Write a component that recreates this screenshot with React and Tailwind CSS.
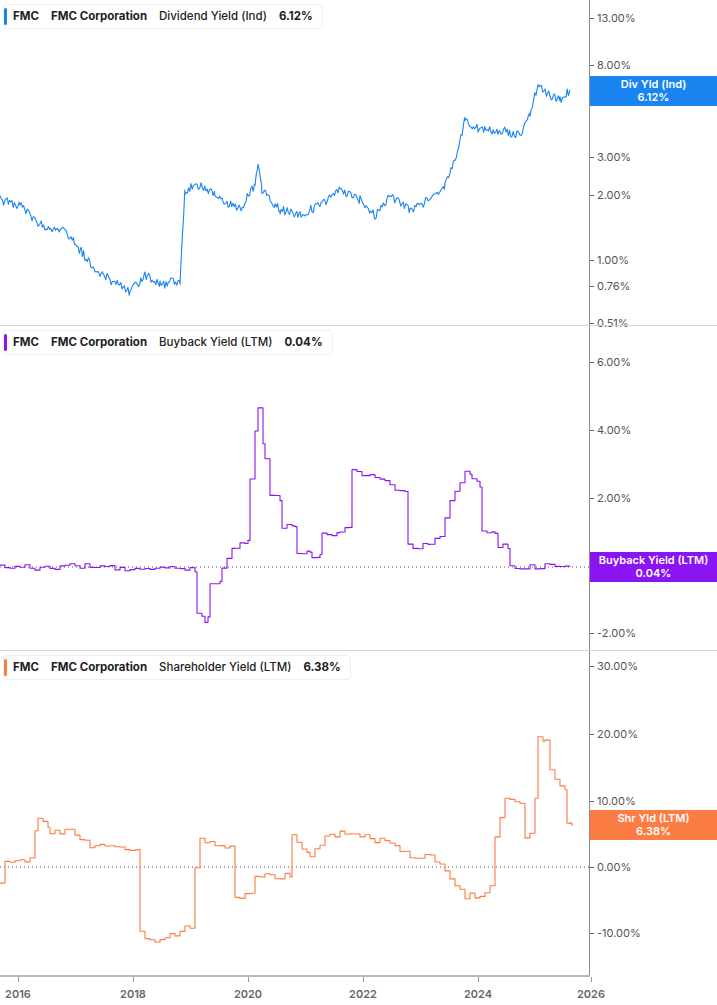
import React from "react"

const W = 590
const H = 325

function rand(seed) {
  let s = seed
  return () => {
    s = (s * 16807) % 2147483647
    return s / 2147483647 - 0.5
  }
}

function buildPath(keys, noise, seed, step) {
  const r = rand(seed)
  const pts = []
  let prevY = null
  for (let i = 0; i < keys.length - 1; i++) {
    const [x0, y0] = keys[i]
    const [x1, y1] = keys[i + 1]
    const inc = step ? 5 : 1.2
    for (let x = x0; x < x1; x += inc) {
      const t = (x - x0) / (x1 - x0 || 1)
      let y = y0 + (y1 - y0) * t + r() * noise
      if (step && prevY !== null) pts.push(`${x.toFixed(1)},${prevY.toFixed(1)}`)
      pts.push(`${x.toFixed(1)},${y.toFixed(1)}`)
      prevY = y
    }
  }
  const last = keys[keys.length - 1]
  if (step && prevY !== null) pts.push(`${last[0]},${prevY.toFixed(1)}`)
  pts.push(`${last[0]},${last[1]}`)
  return pts.join(" ")
}

const panels = [
  {
    ticker: "FMC",
    name: "FMC Corporation",
    metric: "Dividend Yield (Ind)",
    value: "6.12%",
    color: "#1a85f0",
    badge: "Div Yld (Ind)",
    badgeY: 90,
    zeroY: null,
    labels: [["13.00%", 18], ["8.00%", 65], ["6.00%", 92], ["3.00%", 157], ["2.00%", 195], ["1.00%", 260], ["0.76%", 286], ["0.51%", 323]],
    noise: 9,
    step: false,
    keys: [[0, 200], [20, 205], [40, 225], [65, 230], [80, 250], [95, 270], [110, 280], [130, 292], [145, 275], [160, 285], [180, 280], [185, 190], [200, 185], [215, 195], [240, 210], [255, 185], [258, 162], [262, 190], [280, 210], [300, 215], [320, 205], [340, 190], [360, 200], [375, 215], [390, 195], [410, 210], [430, 200], [445, 185], [455, 160], [465, 120], [480, 130], [500, 130], [520, 135], [530, 115], [538, 85], [550, 95], [560, 100], [570, 90]],
  },
  {
    ticker: "FMC",
    name: "FMC Corporation",
    metric: "Buyback Yield (LTM)",
    value: "0.04%",
    color: "#8a14f2",
    badge: "Buyback Yield (LTM)",
    badgeY: 240,
    zeroY: 241,
    labels: [["6.00%", 36], ["4.00%", 104], ["2.00%", 172], ["-2.00%", 307]],
    noise: 6,
    step: true,
    keys: [[0, 242], [80, 240], [100, 241], [140, 244], [195, 243], [197, 285], [205, 297], [208, 290], [210, 260], [220, 258], [222, 240], [235, 220], [248, 215], [250, 150], [258, 80], [265, 130], [270, 170], [280, 175], [282, 200], [295, 200], [297, 225], [310, 225], [312, 232], [320, 230], [322, 210], [340, 205], [350, 200], [352, 145], [370, 150], [390, 160], [405, 165], [408, 220], [430, 220], [440, 210], [450, 175], [465, 145], [472, 150], [480, 160], [482, 205], [495, 210], [498, 220], [508, 220], [510, 240], [570, 240]],
  },
  {
    ticker: "FMC",
    name: "FMC Corporation",
    metric: "Shareholder Yield (LTM)",
    value: "6.38%",
    color: "#fb7d43",
    badge: "Shr Yld (LTM)",
    badgeY: 173,
    zeroY: 216,
    labels: [["30.00%", 15], ["20.00%", 83], ["10.00%", 150], ["0.00%", 216], ["-10.00%", 282]],
    noise: 6,
    step: true,
    keys: [[0, 235], [5, 210], [30, 208], [38, 165], [50, 180], [70, 180], [90, 195], [110, 195], [138, 200], [140, 280], [150, 290], [170, 285], [190, 275], [195, 215], [200, 190], [230, 195], [235, 245], [250, 245], [255, 225], [290, 225], [292, 185], [310, 205], [325, 185], [340, 182], [360, 185], [380, 190], [410, 205], [430, 205], [440, 215], [455, 235], [465, 245], [480, 245], [490, 235], [495, 185], [505, 148], [520, 150], [525, 185], [530, 180], [535, 150], [538, 85], [545, 90], [550, 120], [565, 140], [567, 175], [572, 175]],
  },
]

const years = [["2016", 18], ["2018", 133], ["2020", 248], ["2022", 363], ["2024", 478], ["2026", 591]]

function Panel({ p, i }) {
  return (
    <div className={`relative flex h-[325px] ${i > 0 ? "border-t border-[#d4d4d4]" : ""}`}>
      <div className="relative w-[590px] border-r border-[#888]">
        <svg width={W} height={H} className="absolute left-0 top-0">
          {p.zeroY && (
            <line x1="0" x2={W} y1={p.zeroY} y2={p.zeroY} stroke="#555" strokeWidth="1" strokeDasharray="1 3" />
          )}
          <polyline points={buildPath(p.keys, p.noise, 1234 + i * 77, p.step)} fill="none" stroke={p.color} strokeWidth="1.1" strokeLinejoin="round" />
        </svg>
        <div className="absolute left-[3px] top-[4px] flex items-center gap-[12px] rounded border border-[#eee] bg-white py-[3px] pl-[9px] pr-[9px] text-[11.5px] text-[#222]">
          <span className="absolute bottom-[3px] left-[0px] top-[3px] w-[3px] rounded" style={{ background: p.color }} />
          <span className="font-bold">{p.ticker}</span>
          <span className="font-bold">{p.name}</span>
          <span className="font-medium">{p.metric}</span>
          <span className="font-bold">{p.value}</span>
        </div>
      </div>
      <div className="relative flex-1">
        {p.labels.map(([t, y]) => (
          <div key={t} className="absolute left-0 flex items-center text-[11px] text-[#555]" style={{ top: y - 8 }}>
            <span className="mr-[3px] h-px w-[4px] bg-[#666]" />
            {t}
          </div>
        ))}
        <div className="absolute left-0 right-0 flex flex-col items-center py-[2px] text-[11px] font-semibold leading-[13px] text-white" style={{ top: p.badgeY - 14, background: p.color }}>
          <span>{p.badge}</span>
          <span>{p.value}</span>
        </div>
      </div>
    </div>
  )
}

export default function App() {
  return (
    <div className="w-[717px] h-[1005px] overflow-hidden bg-white" style={{ fontFamily: "Inter, 'Liberation Sans', sans-serif" }}>
      {panels.map((p, i) => (
        <Panel key={i} p={p} i={i} />
      ))}
      <div className="relative h-[31px] w-[590px] border-t-2 border-[#bbb]">
        {years.map(([t, x]) => (
          <div key={t} className="absolute top-0 flex flex-col items-center text-[11px] font-semibold text-[#666]" style={{ left: x - 15, width: 30 }}>
            <span className="h-[5px] w-px bg-[#999]" />
            <span className="mt-[4px]">{t}</span>
          </div>
        ))}
      </div>
    </div>
  )
}
